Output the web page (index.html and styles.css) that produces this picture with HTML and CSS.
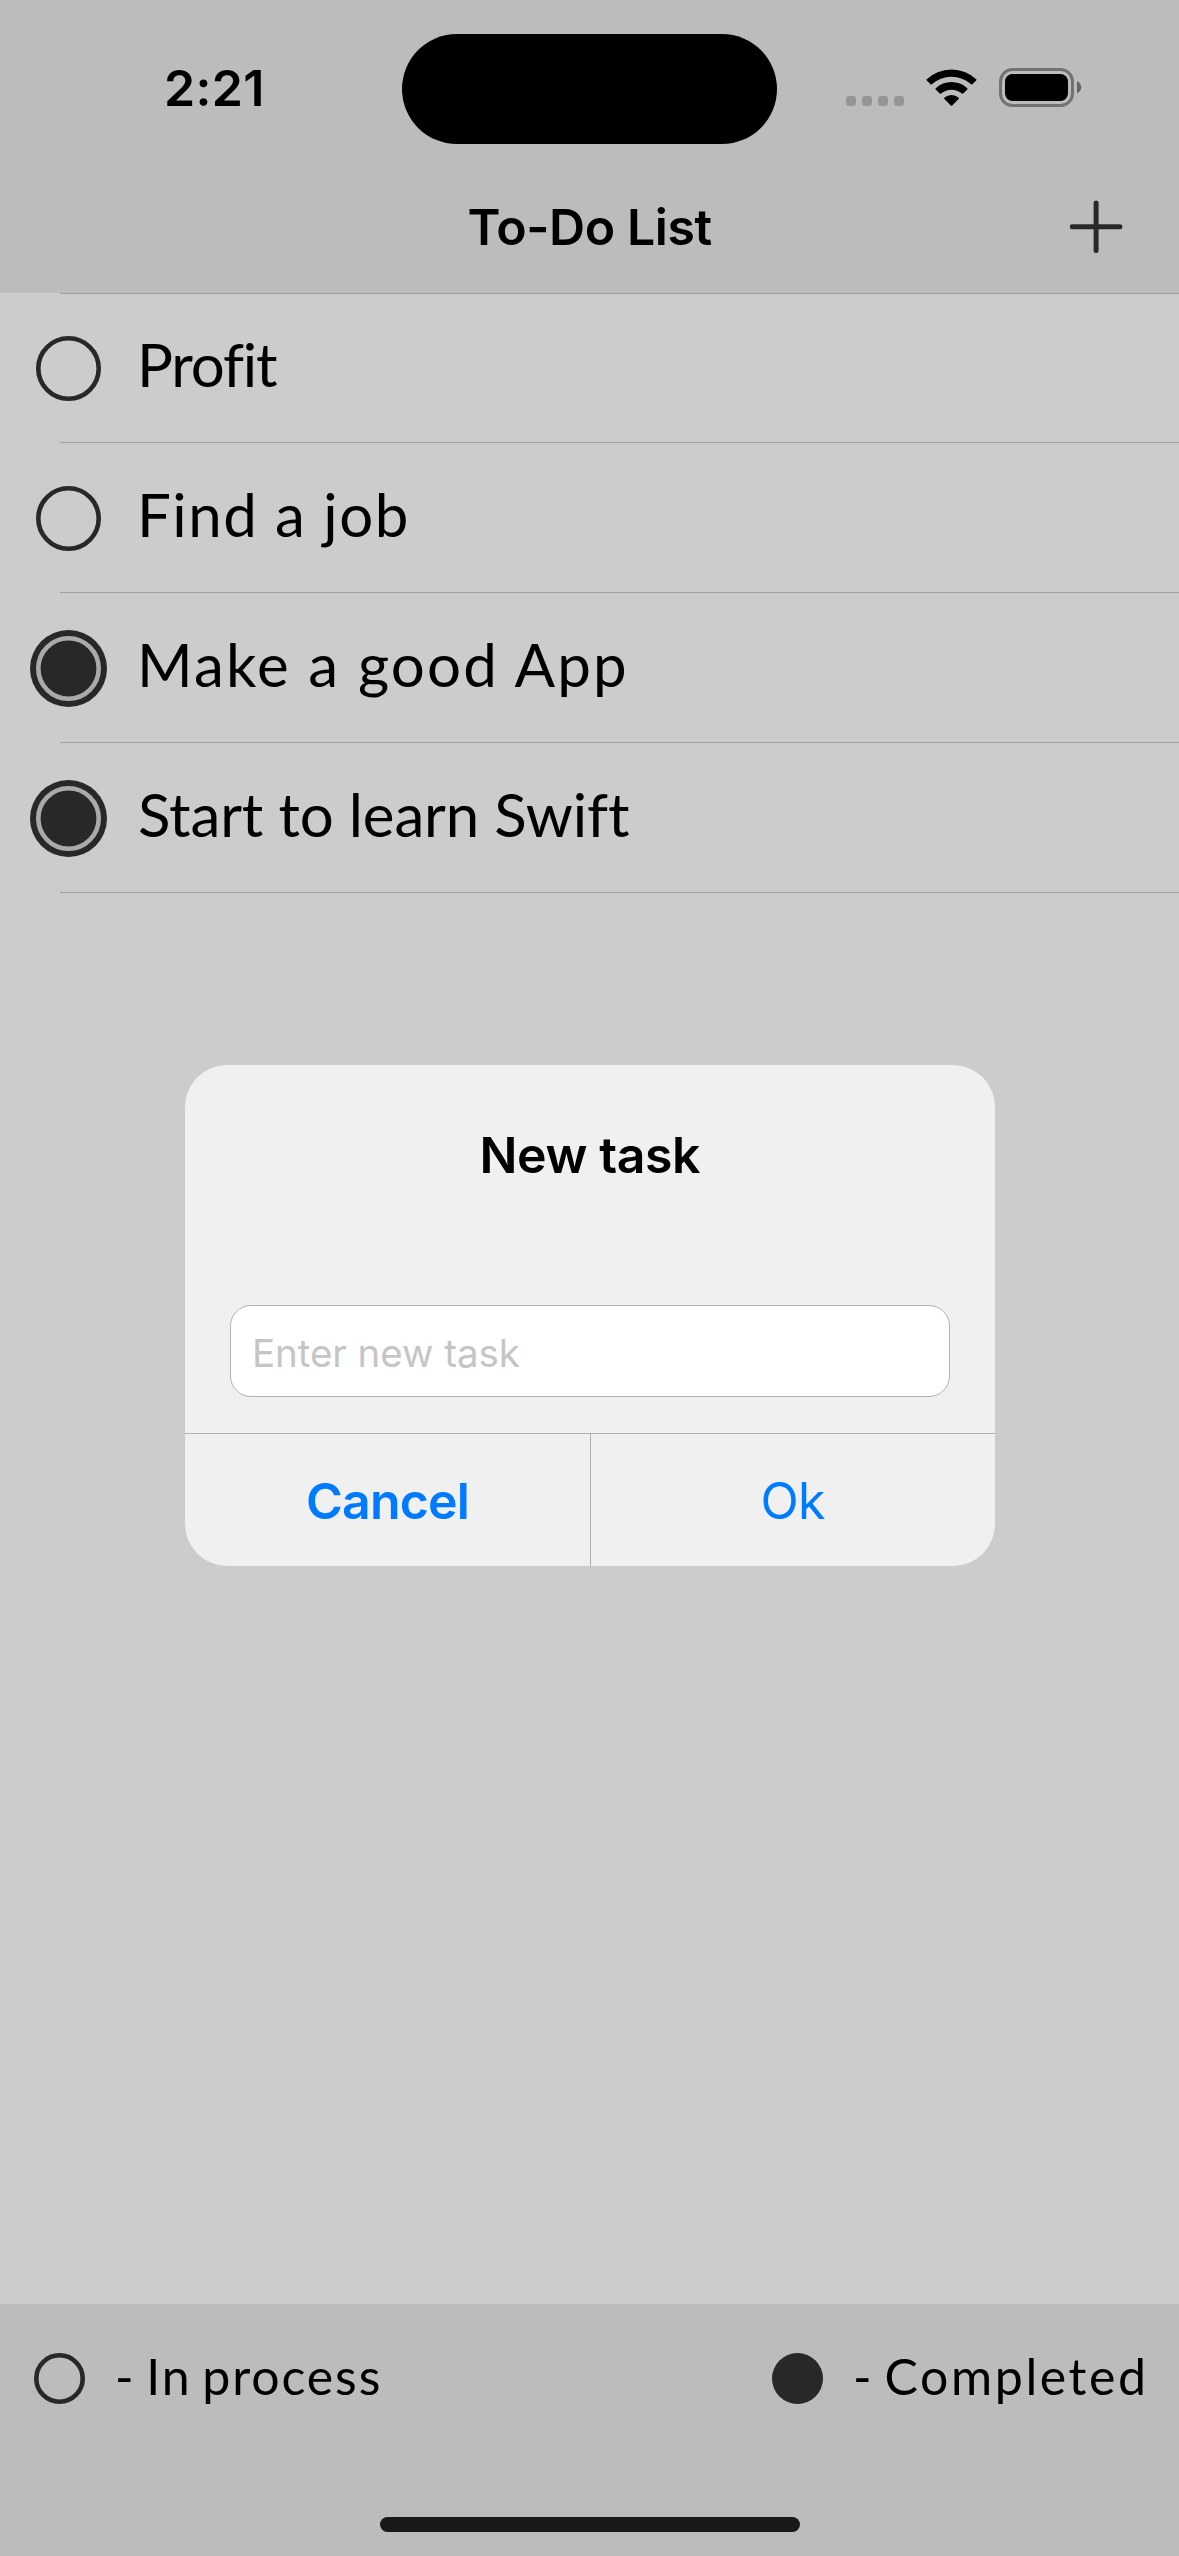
FILE: index.html
```html
<!DOCTYPE html>
<html lang="en">
<head>
<meta charset="utf-8">
<title>To-Do List</title>
<link rel="stylesheet" href="styles.css">
</head>
<body>
<div class="app">
  <header class="header">
    <div class="status">
      <span class="time">2:21</span>
      <div class="island"></div>
      <svg class="status-icons" width="236" height="40" viewBox="846 68 236 40" aria-hidden="true">
        <g fill="#969696">
          <rect x="846" y="96" width="10" height="10" rx="3"/>
          <rect x="862" y="96" width="10" height="10" rx="3"/>
          <rect x="878" y="96" width="10" height="10" rx="3"/>
          <rect x="894" y="96" width="10" height="10" rx="3"/>
        </g>
        <path d="M926.8 79.2A36 36 0 0 1 976.2 79.2Q976.8 79.8 976.2 80.4L972.4 84.2Q971.8 84.8 971.2 84.2A29.6 29.6 0 0 0 931.8 84.2Q931.2 84.8 930.6 84.2L926.8 80.4Q926.2 79.8 926.8 79.2Z"/>
        <path d="M935.7 88.2A23 23 0 0 1 967.3 88.2Q968 88.9 967.3 89.5L963.2 93.5Q962.5 94.1 961.9 93.5A16 16 0 0 0 941.1 93.5Q940.5 94.1 939.8 93.5L935.7 89.5Q935 88.9 935.7 88.2Z"/>
        <path d="M944.5 97.6A10.5 10.5 0 0 1 958.5 97.6Q959.3 98.3 958.6 99L952.2 105.4Q951.5 106.1 950.8 105.4L944.4 99Q943.7 98.3 944.5 97.6Z"/>
        <rect x="1000.5" y="69.5" width="72" height="36" rx="12" fill="none" stroke="#727272" stroke-width="3"/>
        <rect x="1005" y="74" width="63" height="27" rx="7.5"/>
        <path d="M1077 81Q1081.200 83.400 1081.200 87.300Q1081.200 91.200 1077 93.600Z" fill="#666"/>
      </svg>
    </div>
    <div class="nav">
      <h1 class="nav-title">To-Do List</h1>
      <svg class="add" width="54" height="54" viewBox="0 0 54 54" aria-label="Add"><path d="M2.300 26.700H49.900M26.100 2.900V50.500" stroke="#282828" stroke-width="5" stroke-linecap="round"/></svg>
    </div>
  </header>
  <main class="main">
    <ul class="tasks">
      <li class="task"><svg class="mark" viewBox="0 0 77 77"><circle class="ring" cx="38.500" cy="38.500" r="30.200"/></svg><span class="label tight">Profit</span></li>
      <li class="task"><svg class="mark" viewBox="0 0 77 77"><circle class="ring" cx="38.500" cy="38.500" r="30.200"/></svg><span class="label open">Find a job</span></li>
      <li class="task"><svg class="mark" viewBox="0 0 77 77"><circle class="disc" cx="38.500" cy="38.500" r="38.500"/><circle class="inner" cx="38.500" cy="38.500" r="30.200"/></svg><span class="label wide">Make a good App</span></li>
      <li class="task"><svg class="mark" viewBox="0 0 77 77"><circle class="disc" cx="38.500" cy="38.500" r="38.500"/><circle class="inner" cx="38.500" cy="38.500" r="30.200"/></svg><span class="label swift">Start to learn Swift</span></li>
    </ul>
  </main>
  <footer class="footer">
    <div class="legend">
      <div class="key"><svg class="dot" viewBox="0 0 51 51"><circle class="ring" cx="25.500" cy="25.500" r="23.200"/></svg><span class="key-text">- In process</span></div>
      <div class="key"><svg class="dot" viewBox="0 0 51 51"><circle class="disc" cx="25.500" cy="25.500" r="25.500"/></svg><span class="key-text spaced">- Completed</span></div>
    </div>
    <div class="home"></div>
  </footer>
  <section class="dialog" role="dialog">
    <h2 class="dialog-title">New task</h2>
    <div class="field">Enter new task</div>
    <div class="actions">
      <button class="action cancel">Cancel</button>
      <button class="action ok">Ok</button>
    </div>
  </section>
</div>
</body>
</html>
```
FILE: styles.css
```css
* { box-sizing: border-box; }
body { margin: 0; color: #000; font-family: Inter, "Liberation Sans", sans-serif; }
h1, h2, ul { margin: 0; padding: 0; }
svg { display: block; flex: none; }

.app {
  position: relative;
  display: flex;
  flex-direction: column;
  width: 1179px;
  height: 2556px;
  overflow: hidden;
  background: #ccc;
}

.header { height: 293px; background: #bcbcbc; }
.status {
  display: grid;
  grid-template-columns: 238px 375px 1fr;
  align-items: start;
  height: 160px;
  padding: 34px 0 0 164px;
}
.time { margin-top: 24px; font-size: 50px; font-weight: 600; line-height: 60px; letter-spacing: .3px; }
.island { height: 110px; border-radius: 55px; background: #000; }
.status-icons { margin: 34px 0 0 69px; }

.nav { display: flex; justify-content: space-between; padding: 37px 55px 0 467.5px; }
.nav-title { font-size: 50px; font-weight: 600; line-height: 60px; letter-spacing: -.42px; }
.add { margin-top: 3px; }

.main { flex: 1; }
.tasks { list-style: none; background: linear-gradient(#a0a0a0, #a0a0a0) 60px 0 / 100% 1px no-repeat; }
.task {
  display: flex;
  align-items: flex-start;
  gap: 30px;
  height: 150px;
  padding: 37px 0 0 30px;
  background: linear-gradient(#a0a0a0, #a0a0a0) 60px 100% / 100% 1px no-repeat;
}
.mark { width: 77px; height: 77px; }
.ring { fill: none; stroke: #282828; stroke-width: 4.6; }
.disc { fill: #282828; }
.inner { fill: #282828; stroke: #aaa; stroke-width: 4.6; }

.label, .key-text { font-family: Lato, "Liberation Sans", sans-serif; white-space: nowrap; }
.label { margin-top: -2px; font-size: 60px; line-height: 72px; }
.tight { letter-spacing: -1.15px; }
.open { letter-spacing: 1.49px; }
.wide { letter-spacing: 2.18px; }
.swift { margin-left: 1px; letter-spacing: -.13px; }

.footer { display: flex; flex-direction: column; height: 252px; padding-bottom: 24px; background: #bcbcbc; }
.legend { display: grid; grid-template-columns: 738px 1fr; padding: 49px 0 0 34px; }
.key { display: flex; align-items: flex-start; gap: 30px; }
.dot { width: 51px; height: 51px; }
.key-text { margin-top: -7px; font-size: 50px; line-height: 60px; letter-spacing: 1.9px; word-spacing: -4px; }
.spaced { letter-spacing: 2.6px; word-spacing: -5px; }
.home { align-self: center; width: 420px; height: 15px; margin-top: auto; border-radius: 8px; background: #191919; }

.dialog {
  position: absolute;
  top: 1065px;
  left: 185px;
  display: flex;
  flex-direction: column;
  width: 810px;
  height: 501px;
  overflow: hidden;
  border-radius: 42px;
  background: #f0f0f0;
}
.dialog-title { padding: 60px 0 0 294.5px; font-size: 50px; font-weight: 600; line-height: 60px; letter-spacing: -.42px; }
.field {
  height: 92px;
  margin: 120px 45px 0;
  padding: 24px 20px 0 21px;
  border: 1px solid #b2b2b2;
  border-radius: 21px;
  background: #fff;
  color: #c5c5c7;
  font-size: 38.5px;
  line-height: 46px;
  letter-spacing: -.05px;
}
.actions { display: grid; grid-template-columns: 405px 1fr; flex: 1; margin-top: 36px; border-top: 1px solid #b0b0b0; }
.action {
  margin: 0;
  padding: 1px 0 0;
  border: 0;
  background: none;
  color: #007aff;
  font: 400 50px/60px Inter, "Liberation Sans", sans-serif;
  letter-spacing: -.85px;
}
.cancel { font-weight: 600; }
.ok { padding-right: 1px; border-left: 1px solid #b0b0b0; }
```
